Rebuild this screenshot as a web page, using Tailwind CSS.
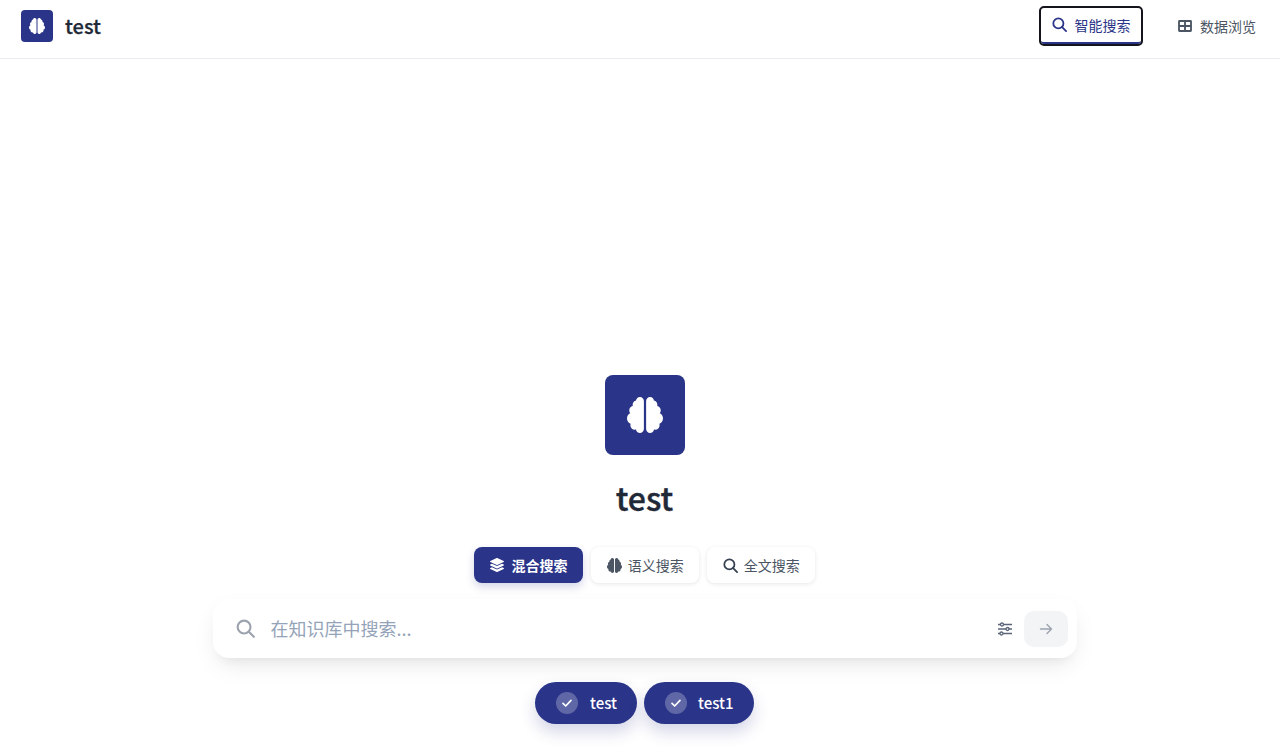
<!DOCTYPE html>
<html lang="zh-CN">
<head>
  <meta charset="UTF-8" />
  <meta name="viewport" content="width=device-width, initial-scale=1.0"/>
  <title>test</title>
  <script src="https://cdn.jsdelivr.net/npm/@tailwindcss/browser@4"></script>
</head>
<body class="bg-white h-[755px] overflow-hidden font-['Noto_Sans_CJK_SC','Noto_Sans',sans-serif]">
  <!-- Top nav -->
  <header class="h-[59px] border-b border-[#e9ebf2] flex items-center justify-between pl-[21px] pr-[11px] pb-[6px]">
    <div class="flex items-center gap-3">
      <div class="w-8 h-8 rounded bg-[#2a3488] flex items-center justify-center">
        <svg class="w-4 h-4 text-white" viewBox="0 0 512 512" fill="currentColor"><path d="M184 0c30.9 0 56 25.1 56 56V456c0 30.9-25.1 56-56 56c-28.9 0-52.7-21.9-55.7-50.1c-5.2 1.4-10.7 2.1-16.3 2.1c-35.3 0-64-28.7-64-64c0-7.4 1.3-14.6 3.6-21.2C21.4 367.4 0 338.2 0 304c0-31.9 18.7-59.5 45.8-72.3C37.1 220.8 32 207 32 192c0-30.7 21.6-56.3 50.4-62.6C80.8 123.9 80 118 80 112c0-29.9 20.6-55.1 48.3-62.1C131.3 21.9 155.1 0 184 0zM328 0c28.9 0 52.6 21.9 55.7 49.9c27.8 7 48.3 32.1 48.3 62.1c0 6-.8 11.9-2.4 17.4c28.8 6.2 50.4 31.9 50.4 62.6c0 15-5.1 28.8-13.8 39.7C493.3 244.5 512 272.1 512 304c0 34.2-21.4 63.4-51.6 74.8c2.3 6.6 3.6 13.8 3.6 21.2c0 35.3-28.7 64-64 64c-5.6 0-11.1-.7-16.3-2.1c-3 28.2-26.8 50.1-55.7 50.1c-30.9 0-56-25.1-56-56V56c0-30.9 25.1-56 56-56z"/></svg>
      </div>
      <span class="text-xl font-medium text-[#1f2937] [-webkit-text-stroke:0.25px_#1f2937]">test</span>
    </div>
    <nav class="flex items-center gap-6">
      <a href="#" class="w-[100px] h-9 flex items-center justify-center gap-2 rounded-[3px] border-b-2 border-[#2a3488] outline-2 outline-[#14141c] text-sm text-[#2a3488]">
        <svg class="w-[15px] h-[15px] -mt-0.5" viewBox="0 0 16 16" fill="none" stroke="currentColor" stroke-width="1.9" stroke-linecap="round"><circle cx="6.8" cy="6.8" r="5.4"/><path d="M10.8 10.8L15 15"/></svg>
        <span>智能搜索</span>
      </a>
      <a href="#" class="w-[104px] h-10 flex items-center justify-center gap-2 text-sm text-[#4b5563]">
        <svg class="w-[14px] h-3" viewBox="0 0 15 13" fill="#4b5563"><path fill-rule="evenodd" d="M1.5 0h12A1.5 1.5 0 0 1 15 1.5v10a1.5 1.5 0 0 1-1.5 1.5h-12A1.5 1.5 0 0 1 0 11.5v-10A1.5 1.5 0 0 1 1.5 0zM2 2.2v3.3h4.5V2.2zm6.5 0v3.3H13V2.2zM2 7.5v3.3h4.5V7.5zm6.5 0v3.3H13V7.5z"/></svg>
        <span>数据浏览</span>
      </a>
    </nav>
  </header>

  <main class="ml-[9px] flex flex-col items-center pt-[316px]">
    <div class="w-20 h-20 rounded-lg bg-[#2a3488] flex items-center justify-center">
      <svg class="w-9 h-9 text-white" viewBox="0 0 512 512" fill="currentColor"><path d="M184 0c30.9 0 56 25.1 56 56V456c0 30.9-25.1 56-56 56c-28.9 0-52.7-21.9-55.7-50.1c-5.2 1.4-10.7 2.1-16.3 2.1c-35.3 0-64-28.7-64-64c0-7.4 1.3-14.6 3.6-21.2C21.4 367.4 0 338.2 0 304c0-31.9 18.7-59.5 45.8-72.3C37.1 220.8 32 207 32 192c0-30.7 21.6-56.3 50.4-62.6C80.8 123.9 80 118 80 112c0-29.9 20.6-55.1 48.3-62.1C131.3 21.9 155.1 0 184 0zM328 0c28.9 0 52.6 21.9 55.7 49.9c27.8 7 48.3 32.1 48.3 62.1c0 6-.8 11.9-2.4 17.4c28.8 6.2 50.4 31.9 50.4 62.6c0 15-5.1 28.8-13.8 39.7C493.3 244.5 512 272.1 512 304c0 34.2-21.4 63.4-51.6 74.8c2.3 6.6 3.6 13.8 3.6 21.2c0 35.3-28.7 64-64 64c-5.6 0-11.1-.7-16.3-2.1c-3 28.2-26.8 50.1-55.7 50.1c-30.9 0-56-25.1-56-56V56c0-30.9 25.1-56 56-56z"/></svg>
    </div>
    <h1 class="mt-5 h-12 leading-[44px] text-[32px] font-medium text-[#1f2937] [-webkit-text-stroke:0.4px_#1f2937]">test</h1>

    <!-- Search modes -->
    <div class="mt-6 flex gap-2">
      <button class="w-[109.5px] h-9 rounded-lg bg-[#2a3488] text-white text-sm font-bold flex items-center justify-center gap-2 shadow-[0_4px_8px_rgba(42,52,136,0.2)]">
        <svg class="w-3.5 h-3.5" viewBox="0 0 512 512" fill="currentColor"><path d="M12.41 148.02l232.94 105.67c6.8 3.09 14.49 3.09 21.29 0l232.94-105.67c16.55-7.51 16.55-32.52 0-40.03L266.65 2.31a25.607 25.607 0 0 0-21.29 0L12.41 107.98c-16.55 7.51-16.55 32.53 0 40.04zm487.18 88.28l-58.09-26.33-161.64 73.27c-7.56 3.43-15.59 5.17-23.86 5.17s-16.29-1.74-23.86-5.17L70.51 209.97l-58.1 26.33c-16.55 7.5-16.55 32.5 0 40l232.94 105.59c6.8 3.08 14.49 3.08 21.29 0L499.59 276.3c16.55-7.5 16.55-32.5 0-40zm0 127.8l-57.87-26.23-161.86 73.37c-7.56 3.43-15.59 5.17-23.86 5.17s-16.29-1.74-23.86-5.17L70.29 337.87 12.41 364.1c-16.55 7.5-16.55 32.5 0 40l232.94 105.59c6.8 3.08 14.49 3.08 21.29 0L499.59 404.1c16.55-7.5 16.55-32.5 0-40z"/></svg>
        混合搜索
      </button>
      <button class="w-[108px] h-9 rounded-lg bg-white text-[#4b5563] text-sm flex items-center justify-center gap-1.5 shadow-[0_1px_4px_rgba(0,0,0,0.1)]">
        <svg class="w-[15px] h-[15px]" viewBox="0 0 512 512" fill="currentColor"><path d="M184 0c30.9 0 56 25.1 56 56V456c0 30.9-25.1 56-56 56c-28.9 0-52.7-21.9-55.7-50.1c-5.2 1.4-10.7 2.1-16.3 2.1c-35.3 0-64-28.7-64-64c0-7.4 1.3-14.6 3.6-21.2C21.4 367.4 0 338.2 0 304c0-31.9 18.7-59.5 45.8-72.3C37.1 220.8 32 207 32 192c0-30.7 21.6-56.3 50.4-62.6C80.8 123.9 80 118 80 112c0-29.9 20.6-55.1 48.3-62.1C131.3 21.9 155.1 0 184 0zM328 0c28.9 0 52.6 21.9 55.7 49.9c27.8 7 48.3 32.1 48.3 62.1c0 6-.8 11.9-2.4 17.4c28.8 6.2 50.4 31.9 50.4 62.6c0 15-5.1 28.8-13.8 39.7C493.3 244.5 512 272.1 512 304c0 34.2-21.4 63.4-51.6 74.8c2.3 6.6 3.6 13.8 3.6 21.2c0 35.3-28.7 64-64 64c-5.6 0-11.1-.7-16.3-2.1c-3 28.2-26.8 50.1-55.7 50.1c-30.9 0-56-25.1-56-56V56c0-30.9 25.1-56 56-56z"/></svg>
        语义搜索
      </button>
      <button class="w-[108px] h-9 rounded-lg bg-white text-[#4b5563] text-sm flex items-center justify-center gap-1.5 shadow-[0_1px_4px_rgba(0,0,0,0.1)]">
        <svg class="w-[15px] h-[15px]" viewBox="0 0 16 16" fill="none" stroke="#374151" stroke-width="1.9" stroke-linecap="round"><circle cx="6.8" cy="6.8" r="5.4"/><path d="M10.8 10.8L15 15"/></svg>
        全文搜索
      </button>
    </div>

    <!-- Search box -->
    <div class="mt-4 w-[864px] h-[59px] rounded-2xl bg-white shadow-[0_10px_25px_-5px_rgba(0,0,0,0.1),0_8px_10px_-6px_rgba(0,0,0,0.05)] flex items-center pl-[23px] pr-[9px]">
      <svg class="w-[19px] h-[19px] shrink-0" viewBox="0 0 16 16" fill="none" stroke="#9ca3af" stroke-width="1.8" stroke-linecap="round"><circle cx="6.8" cy="6.8" r="5.4"/><path d="M10.8 10.8L15 15"/></svg>
      <span class="ml-[16px] flex-1 text-lg leading-6 -mt-0.5 text-[#94a3b8]">在知识库中搜索...</span>
      <svg class="w-4 h-4 shrink-0" viewBox="0 0 16 16" fill="none" stroke="#5b6478" stroke-width="1.3"><path d="M1 3.5h14M1 8h14M1 12.5h14"/><circle cx="5" cy="3.5" r="1.5" fill="#fff"/><circle cx="10.5" cy="8" r="1.5" fill="#fff"/><circle cx="4.5" cy="12.5" r="1.5" fill="#fff"/></svg>
      <button class="ml-[11px] w-11 h-9 rounded-[10px] bg-[#f3f4f6] flex items-center justify-center">
        <svg class="w-3.5 h-3.5" viewBox="0 0 14 14" fill="none" stroke="#9ca3af" stroke-width="1.4" stroke-linecap="round" stroke-linejoin="round"><path d="M1.5 7h11M8 2.5L12.5 7 8 11.5"/></svg>
      </button>
    </div>

    <!-- Knowledge bases -->
    <div class="mt-6 flex gap-[7px]">
      <button class="w-[102px] h-[42px] rounded-full bg-[#2a3488] text-white text-[15px] font-medium flex items-center pl-[21px] gap-3 shadow-[0_8px_16px_rgba(42,52,136,0.2)]">
        <span class="w-[22px] h-[22px] rounded-full bg-white/25 flex items-center justify-center">
          <svg class="w-3 h-3" viewBox="0 0 12 12" fill="none" stroke="#fff" stroke-width="1.7" stroke-linecap="round" stroke-linejoin="round"><path d="M2 6.3l2.7 2.7L10 3.4"/></svg>
        </span>
        test
      </button>
      <button class="w-[110px] h-[42px] rounded-full bg-[#2a3488] text-white text-[15px] font-medium flex items-center pl-[21px] gap-[11px] shadow-[0_8px_16px_rgba(42,52,136,0.2)]">
        <span class="w-[22px] h-[22px] rounded-full bg-white/25 flex items-center justify-center">
          <svg class="w-3 h-3" viewBox="0 0 12 12" fill="none" stroke="#fff" stroke-width="1.7" stroke-linecap="round" stroke-linejoin="round"><path d="M2 6.3l2.7 2.7L10 3.4"/></svg>
        </span>
        test1
      </button>
    </div>
  </main>
</body>
</html>
